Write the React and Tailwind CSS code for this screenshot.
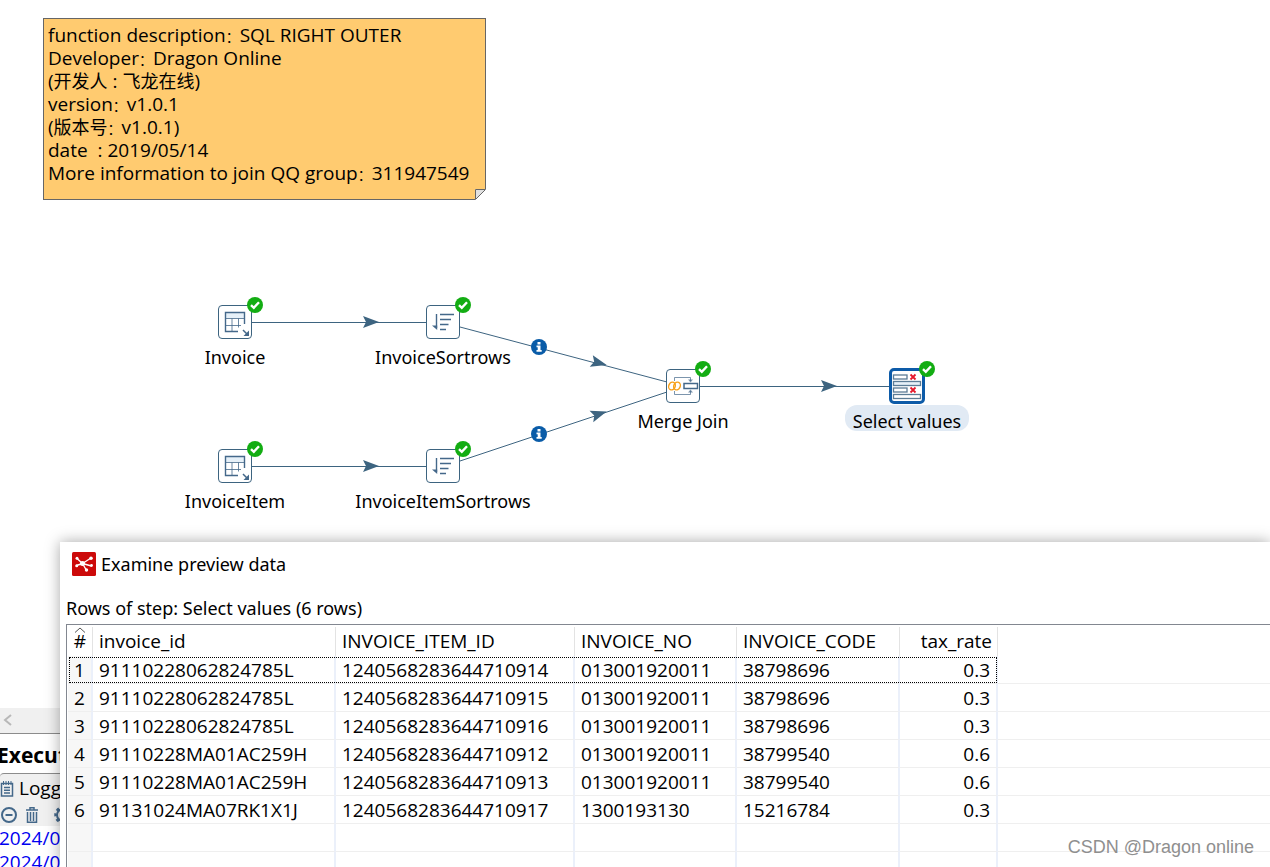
import React from "react";

const columns = [
  { name: "invoice_id", width: "w-[243px]", align: "text-left" },
  { name: "INVOICE_ITEM_ID", width: "w-[239px]", align: "text-left" },
  { name: "INVOICE_NO", width: "w-[162px]", align: "text-left" },
  { name: "INVOICE_CODE", width: "w-[163px]", align: "text-left" },
  { name: "tax_rate", width: "w-[98px]", align: "text-right" },
];

const rows = [
  ["91110228062824785L", "1240568283644710914", "013001920011", "38798696", "0.3"],
  ["91110228062824785L", "1240568283644710915", "013001920011", "38798696", "0.3"],
  ["91110228062824785L", "1240568283644710916", "013001920011", "38798696", "0.3"],
  ["91110228MA01AC259H", "1240568283644710912", "013001920011", "38799540", "0.6"],
  ["91110228MA01AC259H", "1240568283644710913", "013001920011", "38799540", "0.6"],
  ["91131024MA07RK1X1J", "1240568283644710917", "1300193130", "15216784", "0.3"],
];

function Check() {
  return (
    <svg viewBox="0 0 16 16" className="absolute -top-[9px] -right-3 size-4" aria-hidden="true">
      <circle cx="8" cy="8" r="8" fill="#13ad13" />
      <path d="M4 8.2 6.8 10.8 12 5.2" fill="none" stroke="#fff" strokeWidth="2.4" />
    </svg>
  );
}

function TableInputIcon() {
  return (
    <svg viewBox="1 1 32 32" className="size-8" fill="none" stroke="#44688a" aria-hidden="true">
      <rect x="8" y="8" width="18" height="5" fill="#e6f0f8" stroke="none" />
      <path d="M20 26.500H7.500v-19h19V19" strokeWidth="1.400" />
      <path d="M7.500 13.500h19M7.500 20.500h15.500M14 13.500v13M20.500 13.500v9" strokeWidth="1" strokeOpacity=".8" />
      <path d="m25 25 4.500 4.500" strokeWidth="1.500" />
      <path d="M31 25.500V31h-5.500z" fill="#44688a" stroke="none" />
    </svg>
  );
}

function SortIcon() {
  return (
    <svg viewBox="1 1 32 32" className="size-8" fill="none" stroke="#44688a" aria-hidden="true">
      <path d="M10.500 9v14" strokeWidth="1.400" />
      <path d="M6 20.500h5.200v4.500z" fill="#44688a" stroke="none" />
      <path d="M14 9.500h14M14 14.500h11M14 19.500h8.500M14 24.500h6" strokeWidth="1.500" />
    </svg>
  );
}

function MergeIcon() {
  return (
    <svg viewBox="1 1 32 32" className="size-8" fill="none" stroke="#44688a" aria-hidden="true">
      <g stroke="#f7a11b" strokeWidth="1.400">
        <ellipse cx="6" cy="17" rx="3.200" ry="4" transform="rotate(25 6 17)" />
        <ellipse cx="11" cy="17" rx="3.200" ry="4" transform="rotate(25 11 17)" />
      </g>
      <rect x="18" y="14.500" width="13.500" height="5" strokeWidth="1.500" />
      <path d="M8.500 12V8.500h16V12M8.500 22v3.500h16V22" strokeWidth="1" strokeOpacity=".7" />
      <path d="M22 10.500h5l-2.500 3zM22 23.500h5l-2.500-3z" fill="#44688a" fillOpacity=".7" stroke="none" />
    </svg>
  );
}

function SelectIcon() {
  return (
    <svg viewBox="1 1 32 32" className="size-8" fill="none" stroke="#5c7c96" strokeWidth="1.300" aria-hidden="true">
      <rect x="3.500" y="6" width="13.500" height="4" />
      <rect x="3.500" y="12.500" width="27" height="4" fill="#e6f0f8" />
      <rect x="3.500" y="19" width="13.500" height="4" />
      <rect x="3.500" y="25.500" width="27" height="4" />
      <path d="m20.500 5.500 5 5m0-5-5 5M20.500 18.500l5 5m0-5-5 5" stroke="#e5192d" strokeWidth="1.800" />
    </svg>
  );
}

const steps = [
  { name: "Invoice", place: "left-[135px] top-[305px]", Icon: TableInputIcon },
  { name: "InvoiceSortrows", place: "left-[343px] top-[305px]", Icon: SortIcon },
  { name: "InvoiceItem", place: "left-[135px] top-[449px]", Icon: TableInputIcon },
  { name: "InvoiceItemSortrows", place: "left-[343px] top-[449px]", Icon: SortIcon },
  { name: "Merge Join", place: "left-[583px] top-[369px]", Icon: MergeIcon },
  { name: "Select values", place: "left-[807px] top-[369px]", Icon: SelectIcon, selected: true },
];

function Step({ name, place, Icon, selected }) {
  return (
    <div className={"absolute flex w-[200px] flex-col items-center " + place}>
      <div
        className={
          "relative grid size-[34px] place-items-center rounded border bg-white " +
          (selected ? "border-[#0d5ba8] outline-3 -outline-offset-2 outline-[#0d5ba8]" : "border-[#3d6480]")
        }
      >
        <Icon />
        <Check />
      </div>
      <span
        className={
          "mt-[2px] h-[26px] rounded-xl px-2 font-['Noto_Sans',sans-serif] text-[18px] leading-[32px] whitespace-nowrap " +
          (selected ? "bg-[#e1eaf4]" : "")
        }
      >
        {name}
      </span>
    </div>
  );
}

function Info({ x, y }) {
  return (
    <g transform={`translate(${x} ${y})`}>
      <circle r="8" fill="#0a5ca8" />
      <path d="M-1.500-5h3v2.500h-3zM-2.500-1.500h4v4.500h1.200v1.700h-5.200V3h1.200V.2h-1.200z" fill="#fff" />
    </g>
  );
}

function Hops() {
  const arrow = "M-8-6 8 0-8 6-5 0z";
  return (
    <svg className="absolute top-0 left-0 h-[540px] w-[1270px]" viewBox="0 0 1270 540" aria-hidden="true">
      <g stroke="#3d6480" strokeWidth="1" fill="none">
        <path d="M252 322.500h174M252 466.500h174M700 386.500h190" />
        <path d="M460 327 667 382M460 461 667 392" />
      </g>
      <g fill="#3d6480">
        <path d={arrow} transform="translate(371 322)" />
        <path d={arrow} transform="translate(371 466)" />
        <path d={arrow} transform="translate(829 386)" />
        <path d={arrow} transform="translate(599 363) rotate(15)" />
        <path d={arrow} transform="translate(599 414) rotate(-18)" />
      </g>
      <Info x={539} y={347} />
      <Info x={539} y={434} />
    </svg>
  );
}

function Colon() {
  return <span className="text-[14px] leading-none">：</span>;
}

function Han({ children }) {
  return <span className="text-[18px] leading-none">{children}</span>;
}

function Note() {
  return (
    <div className="absolute top-[18px] left-[43px] grid h-[182px] w-[443px] auto-rows-[23px] content-start border border-[#666] bg-[#ffcb70] pt-[5px] pl-1 leading-[23px] whitespace-pre">
      <p>function description<Colon />SQL RIGHT OUTER</p>
      <p>Developer<Colon />Dragon Online</p>
      <p>
        (<Han>开发人</Han> : <Han>飞龙在线</Han>)
      </p>
      <p>version<Colon />v1.0.1</p>
      <p>
        (<Han>版本号</Han><Colon />v1.0.1)
      </p>
      <p>date  : 2019/05/14</p>
      <p>More information to join QQ group<Colon />311947549</p>
      <svg viewBox="0 0 11 11" className="absolute -right-px -bottom-px size-[11px]" aria-hidden="true">
        <path d="M0 0h11v11H0z" fill="#fff" />
        <path d="M.5 10.500V.5h10z" fill="#e1e1e1" stroke="#666" />
      </svg>
    </div>
  );
}

function ResultsPanel() {
  return (
    <section className="shrink-0">
      <div className="flex h-[26px] items-center border-b border-[#8c8c8c] bg-[#f0f0f0]">
        <button type="button" aria-label="Scroll left" className="pb-[2px] pl-[2px]">
          <svg viewBox="0 0 12 12" className="size-3" fill="none" stroke="#b8b8b8" strokeWidth="2">
            <path d="M9 1 3 6l6 5" />
          </svg>
        </button>
      </div>
      <h2 className="-ml-[3px] h-[39px] text-[21px] leading-[42px] font-bold">Execut</h2>
      <div className="h-[53px] rounded-tl border-t border-[#8c8c8c] bg-[#f0f0f0]">
        <button type="button" className="flex h-[29px] items-center gap-[5px]">
          <svg viewBox="0 0 14 16" className="h-4 w-[14px]" fill="none" stroke="#44688a" strokeWidth="1.500" aria-hidden="true">
            <path d="M1.500 2.500h11v12.500h-11zM4 6.500h6M4 9.200h6M4 12h6" />
            <path d="M3.500 0v4M6 0v4M8.500 0v4M11 0v4" strokeWidth="1" />
          </svg>
          Logg
        </button>
        <div className="mt-[3px] flex items-center gap-[7px]">
          <button type="button" aria-label="Collapse">
            <svg viewBox="0 0 18 18" className="size-[18px]" fill="none" stroke="#44688a" strokeWidth="2">
              <circle cx="9" cy="9" r="7" />
              <path d="M5.500 9h7" />
            </svg>
          </button>
          <button type="button" aria-label="Clear log">
            <svg viewBox="0 0 14 18" className="h-[18px] w-[14px]" fill="none" stroke="#44688a" strokeWidth="1.500">
              <path d="M1 4h12M5 3.500V1.700h4v1.800M2.500 6v10.200h9V6M5.500 6v9M8.500 6v9" />
            </svg>
          </button>
          <button type="button" aria-label="Log settings" className="pl-2">
            <svg viewBox="0 0 18 18" className="size-[18px]" fill="none" stroke="#44688a">
              <circle cx="9" cy="9" r="6" strokeWidth="2" />
              <circle cx="9" cy="9" r="7.500" strokeWidth="2.500" strokeDasharray="3 2.890" strokeDashoffset="1.500" />
            </svg>
          </button>
        </div>
      </div>
      <div className="-ml-px h-[41px] leading-[24px] text-[#0000f0]">
        <p>2024/0</p>
        <p>2024/0</p>
      </div>
    </section>
  );
}

function AppIcon() {
  return (
    <svg viewBox="0 0 24 24" className="size-6" aria-hidden="true">
      <rect width="24" height="24" rx="1.500" fill="#cc0a0a" />
      <path
        d="M10.500 11.500 5 6.500M10.500 11.500l-6 2M10.500 11.500 19 6M10.500 11.500l9 2.500M10.500 11.500 14 17.500"
        stroke="#fff"
        strokeWidth="1.400"
      />
      <g fill="#fff">
        <circle cx="10.500" cy="11.500" r="2.500" />
        <circle cx="5" cy="6.300" r="1.500" />
        <circle cx="4.700" cy="13.800" r="1.500" />
        <circle cx="19" cy="6.300" r="1.800" />
        <circle cx="19.500" cy="13.500" r="1.400" />
        <circle cx="14.500" cy="18" r="1.700" />
      </g>
    </svg>
  );
}

function PreviewWindow() {
  return (
    <section className="absolute top-[542px] right-0 bottom-0 left-[60px] flex flex-col bg-white pl-[6px] shadow-[0_0_14px_rgba(0,0,0,0.35)]">
      <header className="flex h-11 items-center gap-[5px] pl-[6px]">
        <AppIcon />
        <h1 className="font-['Noto_Sans',sans-serif] text-[18px]">Examine preview data</h1>
      </header>
      <p className="h-[38px] pt-[7px] font-['Noto_Sans',sans-serif] text-[18px] leading-[30px]">
        Rows of step: Select values (6 rows)
      </p>
      <div className="min-h-0 flex-1 overflow-hidden border-t border-l border-[#828790] pt-[2px] pl-px">
        <table className="w-full table-fixed border-separate border-spacing-0">
          <thead>
            <tr className="h-[29px] leading-[26px]">
              <th scope="col" className="relative w-[25px] border-r border-[#e3e3e3] px-0 pt-0 pb-[2px] text-center font-normal">
                #
                <svg viewBox="0 0 12 6" className="absolute top-0 left-[6px] h-[6px] w-3" fill="none" stroke="#555" aria-hidden="true">
                  <path d="m1 5.500 5-4.500 5 4.500" />
                </svg>
              </th>
              {columns.map((c) => (
                <th key={c.name} scope="col" className={"border-r border-[#e3e3e3] pt-0 pr-[5px] pb-[2px] pl-[6px] font-normal " + c.width + " " + c.align}>
                  {c.name}
                </th>
              ))}
              <td />
            </tr>
          </thead>
          <tbody>
            {rows.map((row, i) => (
              <tr key={row[1]} className="h-7 leading-[26px]">
                <th scope="row" className="relative border-r-2 border-b border-r-[#ebf0fa] border-b-[#efefef] bg-[#f7f7f7] px-0 pt-px pb-0 text-center font-normal">
                  {i + 1}
                  {i === 0 && (
                    <span className="pointer-events-none absolute top-px left-px h-[26px] w-[928px] border border-dotted border-black" />
                  )}
                </th>
                {row.map((value, k) => (
                  <td key={k} className={"border-r-2 border-b border-r-[#ebf0fa] border-b-[#efefef] px-[6px] pt-px pb-0 " + columns[k].align}>
                    {value}
                  </td>
                ))}
                <td className="border-b border-[#efefef]" />
              </tr>
            ))}
            {[0, 1].map((n) => (
              <tr key={n} className="h-7">
                <td className="border-r-2 border-b border-r-[#ebf0fa] border-b-[#efefef] bg-[#f7f7f7]" />
                {columns.map((c) => (
                  <td key={c.name} className="border-r-2 border-b border-r-[#ebf0fa] border-b-[#efefef]" />
                ))}
                <td className="border-b border-[#efefef]" />
              </tr>
            ))}
          </tbody>
        </table>
      </div>
    </section>
  );
}

export default function App() {
  return (
    <main className="relative flex h-screen flex-col overflow-hidden bg-white font-['Open_Sans','Noto_Sans_CJK_SC',sans-serif] text-[19px] text-black">
      <div className="relative min-h-0 flex-1">
        <Note />
        <Hops />
        {steps.map((s) => (
          <Step key={s.name} {...s} />
        ))}
      </div>
      <ResultsPanel />
      <PreviewWindow />
      <p className="absolute right-4 bottom-2 font-['Liberation_Sans',sans-serif] text-[18px] leading-6 text-[#8f8f8f]">
        CSDN @Dragon online
      </p>
    </main>
  );
}
